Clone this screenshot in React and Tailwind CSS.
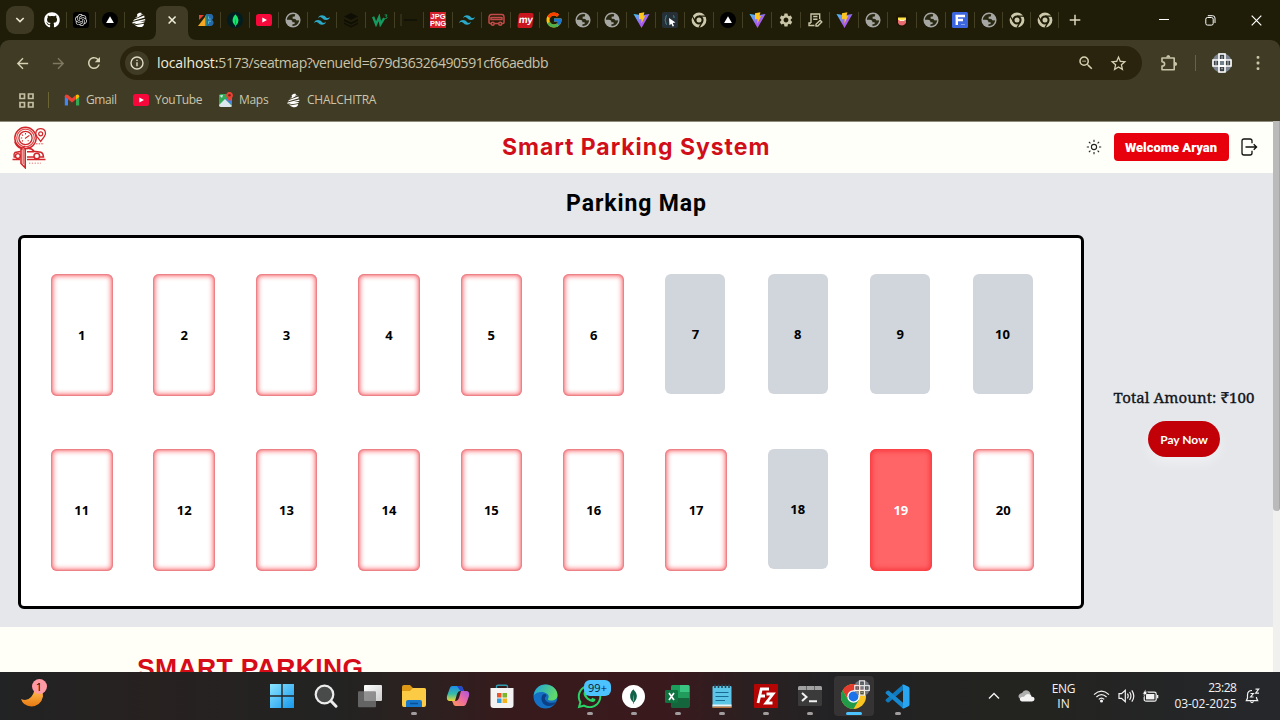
import React, { useId } from "react";
import { FaGithub, FaWhatsapp } from "react-icons/fa";
import { FcGoogle } from "react-icons/fc";
import { SiOpenai, SiTailwindcss, SiMongodb } from "react-icons/si";
import { MdArrowBack, MdArrowForward, MdRefresh, MdSettings, MdStarBorder, MdZoomOut } from "react-icons/md";

const Stork = ({ s = 16 }) => (
  <svg width={s} height={s} viewBox="0 0 16 16" fill="#fff">
    <path d="M6 2.5C7 .8 10 .4 10.8 1.2L9.4 2.6 12.5 2 6.5 5.6 3.8 5.5 6.4 4.6Z" />
    <path d="M3.2 7.4 13.2 3.6 13.6 5.6 2 9Z" />
    <path d="M1.6 10 14 7 14.4 8.2 8.6 9.7 13.8 9.6C13.5 11.2 11 11.5 2.6 12.4L5.2 11 1.4 11.4Z" />
    <path d="M3.8 13.2 13 11.7C13 15 8.6 16.6 3.8 13.2Z" />
  </svg>
);

const Globe = () => (
  <svg width="16" height="16" viewBox="0 0 15 15">
    <circle cx="7.5" cy="7.5" r="7.1" fill="#a6a6a3" />
    <path d="M7.6 1.8C4.4 1.9 1.9 4.4 1.8 7.2L4.6 7.3C6.4 7.4 7 8.1 6.9 9.5L9 9.6V11.2L7 11.4V13.2C10.6 13.4 13.2 10.6 13.2 7.6L12.6 7.9 10.4 7.8 9.8 6.5 7.2 6.4 7.1 4.4 9.2 4.2 9.6 2.2Z" fill="#292812" />
  </svg>
);

const Vite = () => {
  const id = useId();
  return (
    <svg width="17" height="16" viewBox="0 0 17 16">
      <defs>
        <linearGradient id={id} x1="0" y1="0" x2="1" y2="1">
          <stop offset="0" stopColor="#41c8f5" /><stop offset=".55" stopColor="#a55ff0" /><stop offset="1" stopColor="#b84fe0" />
        </linearGradient>
      </defs>
      <path d="M.5 2 8.5 16 16.5 2 9 3.2Z" fill={`url(#${id})`} />
      <path d="M6 1.2 11.4 .2 10.4 4.2 12.2 3.9 8.4 11.5 8.6 6.9 6 7.2Z" fill="#ffc51f" />
    </svg>
  );
};

const Vercel = () => (
  <svg width="16" height="16" viewBox="0 0 16 16"><circle cx="8" cy="8" r="8" fill="#000" /><path d="M8 4.2 11.9 11H4.1Z" fill="#fff" /></svg>
);

const Yt = ({ s = 16 }) => (
  <svg width={s} height="12" viewBox="0 0 16 12"><rect width="16" height="12" rx="2.6" fill="#f6083b" /><path d="M6.3 3.4 11 6 6.3 8.6Z" fill="#fff" /></svg>
);

const Chrome = () => (
  <svg width="16" height="16" viewBox="0 0 16 16" fill="none">
    <circle cx="8" cy="8" r="6" stroke="#cdc9ad" strokeWidth="2.8" />
    <circle cx="8" cy="8" r="2.5" fill="#cdc9ad" />
    <path d="M8 4.1H15M4.6 9.9 1.2 4M11.4 9.9 8 15.6" stroke="#1f1d07" strokeWidth="1.3" />
  </svg>
);

const TwoB = () => (
  <svg width="16" height="15" viewBox="0 0 16 15">
    <path d="M1 2H6L1 7Z" fill="#e94235" /><path d="M0 13 7 4V13Z" fill="#f5a623" /><path d="M7 13V3L9 1V13Z" fill="#34a853" />
    <path d="M8.4 1H13C16 2 15.6 5.5 14 7 16.6 8.5 16 12.5 13 13H8.4Z" fill="#2668a8" />
    <path d="M10.6 3.4V6H12.7M10.6 10.8V8.2H13" stroke="#59b8ce" fill="none" />
  </svg>
);

const MongoTab = () => (
  <span className="flex h-4 w-4 items-center justify-center rounded-full bg-[#021d20]"><SiMongodb size={13} color="#19e46d" /></span>
);

const Layers = () => (
  <svg width="16" height="16" viewBox="0 0 16 16" fill="#0f0e04"><path d="M8 1 15 4.5 8 8 1 4.5Z" /><path d="M1 7 8 10.5 15 7V9L8 12.5 1 9Z" /><path d="M1 10.5 8 14 15 10.5V12L8 15.5 1 12Z" /></svg>
);

const W3 = () => (
  <svg width="17" height="13" viewBox="0 0 18 14" fill="none" stroke="#149a61"><path d="M1 3 4.2 11 7.5 3.5 9 11 13 4.5" strokeWidth="2.6" /><path d="M13.5 1H16L14.8 2.8C17 3 16.5 5.2 13.5 4.8" strokeWidth="1" /></svg>
);

const DarkBar = () => (
  <svg width="18" height="16" viewBox="0 0 18 16"><path d="M1 2V14" stroke="#45412a" /><path d="M4 8H17" stroke="#12110a" strokeWidth="1.6" /></svg>
);

const JpgPng = () => (
  <span className="flex h-4 w-4 flex-col items-center justify-center bg-[#d4202b] font-['Liberation_Sans'] text-[7.5px] leading-[7px] font-bold text-white">
    <span>JPG</span><span>PNG</span>
  </span>
);

const Bus = () => (
  <svg width="17" height="14" viewBox="0 0 17 14" fill="none" stroke="#c24a48" strokeWidth="1.5">
    <path d="M3 1.5H14Q15.8 1.5 16 4V9.5Q16 10.5 15 10.5H2Q1 10.5 1 9.5V5Q1 2 3 1.5Z" /><path d="M3 4.6H14M3 4V6.5H14V4" /><circle cx="4.7" cy="10.8" r="1.5" fill="#23200a" /><circle cx="12.2" cy="10.8" r="1.5" fill="#23200a" />
  </svg>
);

const My = () => (
  <span className="flex h-[15px] w-[15px] -skew-x-6 items-center justify-center rounded-[2px] bg-[#c9151e] pb-0.5 font-['Liberation_Sans'] text-[10px] leading-none font-bold tracking-[-0.5px] text-white">my</span>
);

const CodeCursor = () => (
  <svg width="16" height="16" viewBox="0 0 16 16"><rect width="16" height="16" rx="2" fill="#263036" /><path d="M5 3.5Q3.5 3.5 3.8 6L3 8 3.8 10Q3.5 12.5 5 12.5M11 3.5Q12.5 3.5 12 6" stroke="#3d8792" fill="none" /><path d="M7 6 13.5 10.5 10.8 11 12 14 10.6 14.4 9.4 11.7 7.5 13.3Z" fill="#fff" /></svg>
);

const Doc = () => (
  <svg width="16" height="16" viewBox="0 0 16 16" fill="none" stroke="#c9c5a8" strokeWidth="1.4"><path d="M4 11V2H12.7V7M4 11H2V13.5H7.5M6.2 4.5H10.5M6.2 7.2H10.5M9 14V12.2L13.2 8.3 14.8 9.9 10.8 14Z" /></svg>
);

const Mask = () => (
  <svg width="16" height="16" viewBox="0 0 16 16"><path d="M2 3 8 1 14 3V9Q13 14 8 15 3 14 2 9Z" fill="#1c1607" /><path d="M4 5.5H12V8.5H4Z" fill="#ffe23f" /><path d="M4 8H12V11Q10 13.6 8 13.6 5 13.6 4 11Z" fill="#e76a6f" /><path d="M5.5 7 8 8.3 10.5 7V9H5.5Z" fill="#fff7d0" /></svg>
);

const FTile = () => (
  <svg width="16" height="16" viewBox="0 0 16 16"><rect width="16" height="16" rx="1.5" fill="#3c66e0" /><path d="M3.5 4H13M4.8 3V13M4.8 8H11" stroke="#fff" strokeWidth="2.4" /><path d="M9 12.5H13" stroke="#87a1f0" /></svg>
);

const firstTabs = [
  <FaGithub size={16} color="#fff" />,
  <span className="flex h-4 w-4 items-center justify-center rounded-[3px] bg-black"><SiOpenai size={12} color="#ddd" /></span>,
  <Vercel />,
  <Stork />,
];
const Tw = () => <SiTailwindcss size={16} color="#2aa9c9" />;
const restTabs = [
  <TwoB />, <MongoTab />, <Yt />, <Globe />, <Tw />, <Layers />, <W3 />, <DarkBar />, <JpgPng />, <Tw />,
  <Bus />, <My />, <FcGoogle size={18} />, <Globe />, <Globe />, <Vite />, <CodeCursor />, <Chrome />, <Vercel />, <Vite />,
  <MdSettings size={16} color="#c9c5a8" />, <Doc />, <Vite />, <Globe />, <Mask />, <Globe />, <FTile />, <Globe />, <Chrome />, <Chrome />,
];

const TabCell = ({ icon, last, narrow }) => (
  <div className={`flex h-4 shrink-0 items-center ${narrow ? "w-7" : "w-[29px]"}`}>
    <div className="flex flex-1 items-center justify-center">{icon}</div>
    <div className={last ? "h-4 w-px" : "h-4 w-px bg-[#444026]"} />
  </div>
);

const TabStrip = () => (
  <div className="flex h-10 shrink-0 items-center bg-[#1f1d07]">
    <div className="ml-1.5 flex h-7 w-7 items-center justify-center rounded-[9px] bg-[#3d3922]">
      <svg width="10" height="6" viewBox="0 0 10 6" fill="none" stroke="#e8e4cc" strokeWidth="1.7"><path d="M1.3 1 5 4.6 8.7 1" /></svg>
    </div>
    <div className="ml-[4px] flex w-[115px]">{firstTabs.map((t, i) => <TabCell key={i} icon={t} last={i === 3} />)}</div>
    <div className="flex h-full w-[38px] shrink-0 items-end justify-center">
      <svg width="50" height="34" viewBox="0 0 50 34" className="-mx-2 shrink-0">
        <path d="M0 34Q9 34 9 25V8Q9 0 17 0H33Q41 0 41 8V25Q41 34 50 34Z" fill="#3f3b25" />
        <path d="M21.6 10.5 28.6 17.5M28.6 10.5 21.6 17.5" stroke="#efecd8" strokeWidth="1.6" />
      </svg>
    </div>
    <div className="ml-px flex">{restTabs.map((t, i) => <TabCell key={i} icon={t} narrow={i >= 27} />)}</div>
    <svg width="12" height="12" viewBox="0 0 12 12" className="ml-[10px] shrink-0" stroke="#dcd8bf" strokeWidth="1.5"><path d="M6 .7V11.3M.7 6H11.3" /></svg>
    <svg width="10" height="10" viewBox="0 0 10 10" className="ml-[78px] shrink-0" stroke="#fff"><path d="M0 4.5H10" /></svg>
    <svg width="11" height="11" viewBox="0 0 11 11" className="ml-[36px] shrink-0" fill="none" stroke="#fff"><rect x=".8" y="2.5" width="7.4" height="7.6" rx="1.7" /><path d="M2.8 .7H7.5Q10 .7 10 3.2V8" /></svg>
    <svg width="11" height="11" viewBox="0 0 11 11" className="ml-[35px] shrink-0" stroke="#fff" strokeWidth="1.2"><path d="M.7 .7 10.3 10.3M10.3 .7 .7 10.3" /></svg>
  </div>
);

const Checkered = ({ s }) => (
  <svg width={s} height={s} viewBox="0 0 20 20">
    <circle cx="10" cy="10" r="10" fill="#7d8690" />
    <path d="M7 1H13V7H19V13H13V19H7V13H1V7H7Z" fill="#3c4245" stroke="#fff" strokeWidth="1.6" />
    <path d="M7 7H13V13H7Z" fill="#72818c" stroke="#fff" strokeWidth="1.8" />
    <path d="M4 8V12M16 8V12M10 3V6M9 15.5H11" stroke="#8d979d" strokeWidth="1.5" />
  </svg>
);

const Toolbar = () => (
  <div className="shrink-0 bg-[#1f1d07]">
    <div className="flex h-[46px] items-center rounded-t-[9px] bg-[#3f3b25] pl-1 text-[#d6d1b2]">
      <div className="flex w-9 justify-center"><MdArrowBack size={17} /></div>
      <div className="flex w-9 justify-center text-[#7e7960]"><MdArrowForward size={17} /></div>
      <div className="flex w-9 justify-center"><MdRefresh size={18} /></div>
      <div className="ml-2 flex h-[34px] w-[1022px] items-center rounded-full bg-[#2a240e] pl-[5px]">
        <div className="flex h-6 w-6 items-center justify-center rounded-full bg-[#403b25]">
          <svg width="14" height="14" viewBox="0 0 14 14" fill="none" stroke="#e0dcc4" strokeWidth="1.4"><circle cx="7" cy="7" r="6" /><path d="M7 6.2V10.3M7 3.7V5" /></svg>
        </div>
        <div className="ml-[8px] w-[910px] font-['Open_Sans',sans-serif] text-[14px] leading-none whitespace-nowrap text-[#c8c3aa]"><span className="tracking-[-0.1px] text-[#efecd9]">localhost:</span><span className="tracking-[-0.44px]">5173/seatmap?venueId=679d36326490591cf66aedbb</span></div>
        <div className="ml-[8px] flex w-[22px] justify-center"><MdZoomOut size={18} /></div>
        <div className="ml-[10px] flex w-[22px] justify-center"><MdStarBorder size={19} /></div>
      </div>
      <div className="flex w-[53px] justify-center">
        <svg width="18" height="18" viewBox="0 0 18 18"><path d="M2 4H14.2V15.8H2V12.1Q4.6 12 4.6 9.9 4.6 7.8 2 7.7Z" fill="none" stroke="#c9c5a8" strokeWidth="1.6" strokeLinejoin="round" /><path d="M6.2 3.6Q6.3 1 8.3 1 10.3 1 10.4 3.6ZM14.6 7.8Q17.2 8 17.2 9.9 17.2 11.8 14.6 12Z" fill="#c9c5a8" /></svg>
      </div>
      <div className="h-4 w-px bg-[#666148]" />
      <div className="flex w-[52px] justify-center"><Checkered s={20} /></div>
      <div className="flex w-5 justify-center">
        <svg width="4" height="14" viewBox="0 0 4 14" fill="#c9c5a8"><rect x=".6" y="0" width="2.8" height="2.8" rx="1" /><rect x=".6" y="5.6" width="2.8" height="2.8" rx="1" /><rect x=".6" y="11.2" width="2.8" height="2.8" rx="1" /></svg>
      </div>
    </div>
  </div>
);

const Bookmarks = () => (
  <div className="flex h-[35px] shrink-0 items-center bg-[#3f3b25] pb-[7px] pl-[19px] font-['Open_Sans',sans-serif] text-[12px] leading-none whitespace-nowrap text-[#cbc6ac]">
    <svg width="15" height="15" viewBox="0 0 15 15" fill="none" stroke="#c4bfa3" strokeWidth="1.7"><path d="M1 1H5.5V5.5H1ZM9.5 1H14V5.5H9.5ZM1 9.5H5.5V14H1ZM9.5 9.5H14V14H9.5Z" /></svg>
    <div className="ml-[14px] h-4 w-px bg-[#6c6637]" />
    <svg width="16" height="12" viewBox="0 0 16 12" className="ml-[15px]"><path d="M.8 2V11.5H4V5Z" fill="#4285f4" /><path d="M12 5V11.5H15.2V2Z" fill="#34a853" /><path d="M.8 2.4Q1-.3 4 1L8 4.3 12 1V5.2L8 8.4 4 5.2.8 3Z" fill="#ea4335" /><path d="M12 1Q15-.3 15.2 2.4V3L12 5.4Z" fill="#fbbc04" /></svg>
    <div className="ml-[6px] w-[30px] tracking-[-0.4px]">Gmail</div>
    <div className="ml-[17px]"><Yt /></div>
    <div className="ml-[6px] w-[46px]"><span className="tracking-[-0.3px]">YouTube</span></div>
    <svg width="16" height="16" viewBox="0 0 16 16" className="ml-[17px]"><rect x="1" y="2" width="13" height="13" rx="2" fill="#31a853" /><path d="M1 13 7 7 14 14Q13.5 15 12 15H3Q1 15 1 13Z" fill="#dce6ee" /><path d="M7.5 7.5 11 5 14 9V13Z" fill="#3f83e9" /><path d="M1.5 3.5 5 3 4 6Z" fill="#cfe9f3" /><path d="M11.5 0C8.7 0 7.4 2.8 8.6 5L11.5 10 14.5 5C15.7 2.7 14.2 0 11.5 0Z" fill="#ea4335" /><circle cx="11.5" cy="3.3" r="1.3" fill="#8a1c18" /></svg>
    <div className="ml-[5px] w-[30px]"><span className="tracking-[-0.3px]">Maps</span></div>
    <div className="ml-[17px]"><Stork s={15} /></div>
    <div className="ml-[6px] tracking-[-0.25px]">CHALCHITRA</div>
  </div>
);

const Logo = () => (
  <svg width="35" height="43" viewBox="0 0 35 43" fill="none" stroke="#d2262b">
    <circle cx="13.5" cy="12" r="10.7" strokeWidth="1.4" /><circle cx="13.5" cy="12" r="8.8" strokeWidth="1.2" stroke="#e04e50" /><circle cx="13.5" cy="12" r="6.6" strokeWidth="1.3" />
    <path d="M13.5 7V8.5M8.8 12H10.2M10 8.7 11 9.6M10 15.3 11 14.5M13 12.5 17.4 9.4M16.5 15.2 15.8 14.3" strokeWidth="1.1" />
    <path d="M2.8 15.5Q4.2 20.5 9 22.3V37.5L13.2 41.7V22.6M9 24 13 20" strokeWidth="1.6" /><path d="M11.2 22V38" stroke="#ec7371" strokeWidth="1.7" />
    <path d="M28.7 2.7C24 2.7 22.6 7 24.8 10.3L28.7 15.4 32.4 10.3C34.7 7 33.3 2.7 28.7 2.7Z" strokeWidth="1.3" /><circle cx="28.7" cy="7.8" r="2" strokeWidth="1.2" />
    <path d="M24 17.8H32" strokeWidth=".8" strokeDasharray="1.6 1" />
    <path d="M15 22.4Q19.5 22 22 25.3L29 26.2Q31.2 27 31.5 31H28M15 25.7H22M22 31H15M8.5 25.5 3 26.5Q1.4 28 2.2 31H4" strokeWidth="1.5" />
    <circle cx="24.8" cy="30" r="2.8" strokeWidth="1.5" /><circle cx="5.9" cy="30" r="2.4" strokeWidth="1.4" />
    <path d="M.5 33.5H8M15 33.5H33.5" strokeWidth="1.4" /><path d="M17 37.2H29" strokeWidth="1.4" strokeDasharray="1.3 1.5" stroke="#eba3a1" />
  </svg>
);

const Header = () => (
  <header className="flex h-[52px] shrink-0 items-center border-t border-[#8c8b7c] bg-[#fffffa] pl-3">
    <Logo />
    <h1 className="ml-[455px] w-[580px] font-['Inter',sans-serif] text-[23px] leading-none font-bold tracking-[0.95px] whitespace-nowrap text-[#d10f1a]">Smart Parking System</h1>
    <svg width="16" height="16" viewBox="0 0 16 16" className="mb-px ml-[3.5px]" fill="none" stroke="#222" strokeWidth="1.1"><circle cx="8" cy="8" r="2.6" /><path d="M8 .8V3M8 13V15.2M.8 8H3M13 8H15.2M2.9 2.9 4.4 4.4M11.6 11.6 13.1 13.1M2.9 13.1 4.4 11.6M11.6 4.4 13.1 2.9" /></svg>
    <button className="mb-px ml-3 flex h-[28px] w-[115px] items-center justify-center rounded-[4px] bg-[#e7000b] font-['Roboto',sans-serif] text-[13px] leading-none font-black whitespace-nowrap text-white">Welcome Aryan</button>
    <svg width="17" height="18" viewBox="0 0 17 18" className="mb-px ml-[12px]" fill="none" stroke="#111" strokeWidth="1.3"><path d="M11 5.3V3Q11 1 9 1H3Q1 1 1 3V15Q1 17 3 17H9Q11 17 11 15V12.7M4.5 9H15.5M12.7 6.2 15.6 9 12.7 11.8" /></svg>
  </header>
);

const reserved = [7, 8, 9, 10, 18];
const seatStyle = (n) => {
  if (n === 19) return "h-[121.5px] w-[61.5px] bg-[#ff6467] text-white shadow-[inset_0_0_5px_2px_#f8363b]";
  if (reserved.includes(n)) return "h-[120px] w-[60px] bg-[#d1d5dc] text-black";
  return "h-[121.5px] w-[61.5px] bg-white text-black shadow-[inset_0_0_2px_1px_#e5757c,inset_0_0_4px_3px_#ff9a9e]";
};

const Seat = ({ n }) => (
  <div className={`flex items-center justify-center rounded-[6px] pt-px font-['Open_Sans',sans-serif] text-[13px] leading-none font-bold ${seatStyle(n)}`}>{n}</div>
);

const ParkingMap = () => (
  <main className="flex h-[454px] shrink-0 flex-col bg-[#e5e7eb]">
    <h2 className="mt-[20px] h-[22px] text-center font-['Roboto',sans-serif] text-[23px] leading-[22px] font-bold tracking-[0.9px] text-black">Parking Map</h2>
    <div className="mt-[20px] ml-[18px] flex items-stretch">
      <section className="grid h-[374px] w-[1066px] shrink-0 auto-rows-[175.4px] grid-cols-[repeat(10,102.4px)] rounded-[6px] border-3 border-black bg-white pt-[36px] pl-[30px]">
        {Array.from({ length: 20 }, (_, i) => <Seat key={i} n={i + 1} />)}
      </section>
      <aside className="flex w-[189px] flex-col items-center pt-[153px] pl-[11px]">
        <p className="font-['Noto_Serif','DejaVu_Serif_Condensed','DejaVu_Serif',serif] text-[15px] leading-[19px] tracking-[0.1px] whitespace-nowrap text-[#111318] [-webkit-text-stroke:0.35px_#111318]">Total Amount: ₹100</p>
        <button className="mt-[14px] flex h-9 w-[72px] items-center justify-center rounded-full bg-[#c10007] pt-0.5 font-['Lato',sans-serif] text-[12px] leading-none font-bold whitespace-nowrap text-white shadow-[0_6px_12px_rgba(255,255,255,0.4)]">Pay Now</button>
      </aside>
    </div>
  </main>
);

const WinIcon = () => (
  <svg width="24" height="24" viewBox="0 0 24 24"><defs><linearGradient id="win" x1="0" y1="0" x2="1" y2="1"><stop stopColor="#8be4ff" /><stop offset="1" stopColor="#1698ee" /></linearGradient></defs><path d="M0 0H11.3V11.3H0ZM12.7 0H24V11.3H12.7ZM0 12.7H11.3V24H0ZM12.7 12.7H24V24H12.7Z" fill="url(#win)" /></svg>
);
const SearchIcon = () => (
  <svg width="24" height="24" viewBox="0 0 24 24" fill="none" stroke="#ececec"><circle cx="10.5" cy="10.5" r="8.8" strokeWidth="2.2" fill="#494b4b" /><path d="M17 17 22 22.2" strokeWidth="3" strokeLinecap="round" /></svg>
);
const TaskView = () => (
  <svg width="24" height="23" viewBox="0 0 24 23"><defs><linearGradient id="tv" x1="0" y1="0" x2="1" y2="1"><stop stopColor="#fff" /><stop offset="1" stopColor="#ccc" /></linearGradient></defs><rect x="6" y="0" width="18" height="16" rx="1" fill="url(#tv)" /><rect x="0" y="6.3" width="18" height="16" rx="1" fill="#777" fillOpacity=".78" /></svg>
);
const Folder = () => (
  <svg width="26" height="24" viewBox="0 0 26 24"><path d="M1 3Q1 1 3 1H9L12 4H23Q25 4 25 6V10H1Z" fill="#dd9815" /><path d="M1 7H9L12 4H23Q25 4 25 6V21Q25 23 23 23H3Q1 23 1 21Z" fill="#fccb45" /><path d="M5 23V18Q5 16 7 16H19Q21 16 21 18V23Z" fill="#1778cb" /><path d="M9 19.5H17" stroke="#0b4f96" strokeWidth="1.5" /></svg>
);
const Copilot = () => (
  <svg width="24" height="24" viewBox="0 0 24 24">
    <defs><linearGradient id="cp1" x1="0" y1="0" x2="0" y2="1"><stop stopColor="#1b8de9" /><stop offset=".55" stopColor="#39bda5" /><stop offset="1" stopColor="#f0d633" /></linearGradient><linearGradient id="cp2" x1="1" y1="0" x2="0" y2="1"><stop stopColor="#a855e0" /><stop offset=".5" stopColor="#f06b9c" /><stop offset="1" stopColor="#fa9a57" /></linearGradient></defs>
    <path d="M6 2H14Q16.5 2 17 5L18 7H14Q12 7 11 10L9 17H4Q0 17 1 12L3.5 5Q4.3 2 6 2Z" fill="url(#cp1)" />
    <path d="M18 22H10Q7.5 22 7 19L6 17H10Q12 17 13 14L15 7H20Q24 7 23 12L20.5 19Q19.7 22 18 22Z" fill="url(#cp2)" />
    <path d="M11 2H14Q16.5 2 17 5L18 7H14.5L13 5Z" fill="#2947c8" />
  </svg>
);
const Store = () => (
  <svg width="24" height="25" viewBox="0 0 24 25"><path d="M6.5 6V2.5Q6.5 1.2 8 1.2H16Q17.5 1.2 17.5 2.5V6" fill="none" stroke="#2e9bb0" strokeWidth="1.4" /><path d="M.5 4H23.5V21Q23.5 24 20.5 24H3.5Q.5 24 .5 21Z" fill="#f3f3f3" /><path d="M7 9H11.5V13.5H7Z" fill="#e9552c" /><path d="M12.5 9H17V13.5H12.5Z" fill="#7db52c" /><path d="M7 14.5H11.5V19H7Z" fill="#2f9de0" /><path d="M12.5 14.5H17V19H12.5Z" fill="#f3b51c" /></svg>
);
const Edge = () => (
  <svg width="25" height="25" viewBox="0 0 25 25"><defs><linearGradient id="ed" x1="0" y1="0" x2="1" y2=".4"><stop stopColor="#1ba1e2" /><stop offset="1" stopColor="#60d96b" /></linearGradient></defs>
    <circle cx="12.5" cy="12.5" r="12" fill="#1470c4" /><path d="M.6 11.5C2 3.5 7.5.5 12.5.5 20 .5 24.5 6 24.5 11 24.5 16 19.5 17.4 15.5 16 14.2 15.3 16 14 15.6 12 14.4 7.7 5 6 .6 11.5Z" fill="url(#ed)" /><path d="M9.5 11C7 14.5 9 22 16 22 19 22 21.5 20.5 23 18 21 19 14 20 12 15.5 11.3 13.7 13 12.5 13.5 11.2 12.5 9.8 10.5 9.8 9.5 11Z" fill="#0c3f83" /></svg>
);
const WhatsApp = () => (
  <div className="relative"><FaWhatsapp size={27} color="#29d366" /><span className="absolute -top-[3px] left-[8px] flex h-[16px] w-[27px] items-center justify-center rounded-[6px] bg-[#4cc2ff] font-['Open_Sans',sans-serif] text-[11px] leading-none text-[#10202b]">99+</span></div>
);
const Mongo = () => <span className="flex h-[23px] w-[23px] items-center justify-center rounded-full bg-white"><SiMongodb size={15} color="#126149" /></span>;
const Excel = () => (
  <svg width="25" height="23" viewBox="0 0 25 23"><rect x="6" width="18.5" height="22.5" rx="1.5" fill="#1c9f5c" /><path d="M15 0H23Q24.5 0 24.5 1.5V7H15Z" fill="#39c481" /><path d="M15 7H24.5V15H15Z" fill="#219c5d" /><path d="M6 13H24.5V21Q24.5 22.5 23 22.5H7.5Q6 22.5 6 21Z" fill="#14653c" /><rect y="5" width="13" height="13" rx="1.3" fill="#107340" /><path d="M4 8 9 15M9 8 4 15" stroke="#fff" strokeWidth="1.7" /></svg>
);
const Notepad = () => (
  <svg width="20" height="25" viewBox="0 0 20 25"><rect x=".5" y="2" width="19" height="22" rx="1" fill="#5bc6e8" /><path d="M.5 20.5H19.5V22.5H.5Z" fill="#edf3f5" /><path d="M.5 22.5H19.5V24H.5Z" fill="#bd7440" /><path d="M3.5 8.5H16.5M3.5 12.5H16.5M3.5 16.5H13" stroke="#176a91" strokeWidth="1.2" /><path d="M3 .5V4M6.5 .5V4M10 .5V4M13.5 .5V4M17 .5V4" stroke="#264657" strokeWidth="1.6" /></svg>
);
const FileZilla = () => (
  <svg width="24" height="24" viewBox="0 0 24 24"><rect width="24" height="24" rx="1" fill="#b40505" /><path d="M4 19 7.3 5H15M5.5 12H11M12.5 10H19L12 19H18.5" fill="none" stroke="#fff" strokeWidth="2.8" /></svg>
);
const Terminal = () => (
  <svg width="24" height="20" viewBox="0 0 24 20"><rect width="24" height="20" rx="1.5" fill="#3b3b3b" /><path d="M0 4V1.5Q0 0 1.5 0H22.5Q24 0 24 1.5V4Z" fill="#a0a0a0" /><path d="M8.5 0V4M16.5 0V4" stroke="#646464" /><path d="M4 7 8.5 11 4 15M11 15.3H19" fill="none" stroke="#f1f1f1" strokeWidth="2" /></svg>
);
const ChromeColor = () => (
  <div className="relative">
    <svg width="25" height="25" viewBox="0 0 24 24"><circle cx="12" cy="12" r="12" fill="#fbc41f" /><path d="M1.6 6A12 12 0 0 1 22.4 6H12L6.8 15Z" fill="#e33b2e" /><path d="M1.6 6A12 12 0 0 0 12 24L17.2 15H6.8Z" fill="#229b48" /><circle cx="12" cy="12" r="6" fill="#fff" /><circle cx="12" cy="12" r="4.7" fill="#1a73e8" /></svg>
    <span className="absolute -top-[4px] left-[13px] opacity-85"><Checkered s={16} /></span>
  </div>
);
const VsCode = () => (
  <svg width="25" height="25" viewBox="0 0 25 25"><path d="M18 .6V6.3L4 18.2Q3 19 2 18L.8 16.9Q.2 16 1 15.2Z" fill="#0f79bd" /><path d="M18 24.4V18.7L4 6.8Q3 6 2 7L.8 8.1Q.2 9 1 9.8Z" fill="#1688cf" /><path d="M17 1.3Q18 .2 19.3 .8L23.5 2.8Q24.5 3.4 24.5 4.5V20.5Q24.5 21.6 23.5 22.2L19.3 24.2Q18 24.8 17 23.7Q18 24 18 22.5V2.5Q18 1 17 1.3Z" fill="#2aa5ef" /></svg>
);

const apps = [
  [<WinIcon />, 0], [<SearchIcon />, 0], [<TaskView />, 0], [<Folder />, 1], [<Copilot />, 0], [<Store />, 0], [<Edge />, 0],
  [<WhatsApp />, 1], [<Mongo />, 1], [<Excel />, 1], [<Notepad />, 1], [<FileZilla />, 1], [<Terminal />, 1], [<ChromeColor />, 2], [<VsCode />, 1],
];

const TaskApp = ({ icon, state }) => (
  <div className="flex h-12 w-11 shrink-0 items-center justify-center">
    <div className={`relative flex h-10 w-10 items-center justify-center rounded-[4px] ${state === 2 ? "bg-[#353334]" : ""}`}>
      {icon}
      {state === 1 && <span className="absolute bottom-px h-[3px] w-[6px] rounded-full bg-[#a19c9e]" />}
      {state === 2 && <span className="absolute bottom-px h-[3px] w-4 rounded-full bg-[#4cc2ff]" />}
    </div>
  </div>
);

const Taskbar = () => (
  <footer className="flex h-12 shrink-0 items-center bg-[linear-gradient(90deg,#222324_0%,#272120_12%,#222322_26%,#2c2120_33%,#371a1c_40%,#3a191d_52%,#2a2021_59%,#222224_65%,#23231f_80%,#25272b_100%)] font-['Open_Sans',sans-serif] text-[#f2f2f2]">
    <div className="relative ml-5 h-8 w-7">
      <svg width="24" height="20" viewBox="0 0 24 20" className="mt-[8px]"><defs><linearGradient id="moon" x1="0" y1="0" x2="0" y2="1"><stop stopColor="#ffc052" /><stop offset="1" stopColor="#e97912" /></linearGradient></defs><path d="M1 11Q11 15 15 1 24 1 23 8.5 21 17.5 11.5 18.5 3 18 1 11Z" fill="url(#moon)" /></svg>
      <span className="absolute -top-[1px] left-[11.5px] flex h-[15px] w-[15px] items-center justify-center rounded-full bg-[#ff99a4] text-[11px] leading-none text-black">1</span>
    </div>
    <div className="ml-[211.5px] flex">{apps.map(([icon, s], i) => <TaskApp key={i} icon={icon} state={s} />)}</div>
    <svg width="12" height="8" viewBox="0 0 12 8" className="ml-[68.5px] shrink-0" fill="none" stroke="#f4f4f4" strokeWidth="1.4"><path d="M1 6.5 6 1.5 11 6.5" /></svg>
    <svg width="17" height="12" viewBox="0 0 17 12" className="ml-[17.5px] shrink-0"><path d="M4 9Q0 9 .6 5.5 1.5 3 4 3 6-.8 9.5.5 12.5 1.5 12.5 5Z" fill="#aeb0b0" /><path d="M4 11.5Q1.2 10.7 2 8.3 3 6.2 6 6.8 8.5 2.8 12 4.6 13.3 5.2 13.6 6.7 16.5 6.5 16.6 9 16.5 11.3 14 11.5Z" fill="#f4f4f4" /></svg>
    <div className="ml-[17px] w-6 text-center text-[12px] leading-[15px]"><div className="-mx-2 tracking-[-0.3px]">ENG</div><div>IN</div></div>
    <svg width="17" height="13" viewBox="0 0 17 13" className="ml-[17.5px] shrink-0" fill="none" stroke="#f2f2f2" strokeWidth="1.2"><path d="M1 4.6Q8.5-2.4 16 4.6M3.4 7Q8.5 2.2 13.6 7M5.8 9.4Q8.5 6.8 11.2 9.4" /><circle cx="8.5" cy="11" r=".9" fill="#fff" /></svg>
    <svg width="17" height="14" viewBox="0 0 17 14" className="ml-[7.5px] shrink-0" fill="none" stroke="#f2f2f2" strokeWidth="1.2"><path d="M1 4.7H3.5L7.3 1.3V12.7L3.5 9.3H1ZM9.4 4.7Q11 7 9.4 9.3M11.6 3Q14.3 7 11.6 11M13.8 1.3Q17.8 7 13.8 12.7" /></svg>
    <svg width="17" height="14" viewBox="0 0 17 14" className="ml-[7px] shrink-0"><rect x="2.2" y="3.2" width="12" height="9" rx="1.8" fill="none" stroke="#f2f2f2" strokeWidth="1.2" /><rect x="4" y="5" width="8.4" height="5.4" fill="#f2f2f2" /><path d="M15 6H16.3V9.3H15Z" fill="#f2f2f2" /><path d="M3.8 0 .3 5H2.2L1.2 8 6 3.2H4Z" fill="#fff" stroke="#242523" strokeWidth=".7" /></svg>
    <div className="ml-[7px] w-[71px] text-right text-[12px] leading-[16px] whitespace-nowrap"><div className="tracking-[-0.45px]">23:28</div><div className="-ml-3 tracking-[-0.05px]">03-02-2025</div></div>
    <svg width="15" height="16" viewBox="0 0 15 16" className="ml-[8px] shrink-0" fill="none" stroke="#f2f2f2" strokeWidth="1.2"><path d="M7 2.5Q2.5 2.5 2.5 7V10L1.3 12.7H12.7L11.5 10V9M5.5 13.5Q7 15.8 8.5 13.5M5.5 5.5H8.3L5.6 9H8.5M10.5 1.2H13.7L10.7 5.2H14" /></svg>
  </footer>
);

export default function App() {
  return (
    <div className="flex h-[720px] w-[1280px] flex-col overflow-hidden bg-[#fffffa]">
      <TabStrip />
      <Toolbar />
      <Bookmarks />
      <div className="flex h-[551px] shrink-0">
        <div className="flex w-[1273px] flex-col overflow-hidden">
          <Header />
          <ParkingMap />
          <section className="h-[45px] shrink-0 overflow-hidden bg-[#fffff8] pt-[26px] pl-[137px]">
            <h2 className="font-['Liberation_Sans',sans-serif] text-[26.5px] leading-[30px] font-bold tracking-[0.35px] whitespace-nowrap text-[#d60c18]">SMART PARKING</h2>
          </section>
        </div>
        <div className="w-[7px] bg-[#f0f0ee]"><div className="h-[390px] rounded-b-[4px] border-r border-[#a5a6a5] bg-[#b9bab9]" /></div>
      </div>
      <Taskbar />
    </div>
  );
}
